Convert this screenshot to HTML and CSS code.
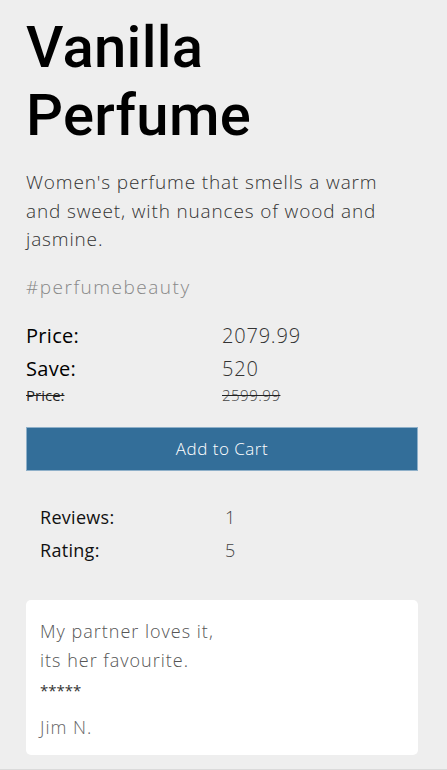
FILE: index.html
```html
<!DOCTYPE html>
<html lang="en">
<head>
<meta charset="utf-8">
<title>Vanilla Perfume</title>
<link rel="stylesheet" href="styles.css">
</head>
<body>
<main class="product">
  <h1 class="title">Vanilla Perfume</h1>
  <p class="desc">Women's perfume that smells a warm and sweet, with nuances of wood and jasmine.</p>
  <p class="tag">#perfumebeauty</p>
  <div class="prices">
    <div class="row big"><span class="label">Price:</span><span class="value">2079.99</span></div>
    <div class="row big"><span class="label">Save:</span><span class="value">520</span></div>
    <div class="row old"><span class="label">Price:</span><span class="value">2599.99</span></div>
  </div>
  <button class="cart">Add to Cart</button>
  <div class="stats">
    <div class="row"><span class="label">Reviews:</span><span class="value">1</span></div>
    <div class="row"><span class="label">Rating:</span><span class="value">5</span></div>
  </div>
  <div class="review">
    <p class="quote">My partner loves it,<br>its her favourite.</p>
    <p class="stars">*****</p>
    <p class="author">Jim N.</p>
  </div>
</main>
<div class="rule"></div>
</body>
</html>
```

FILE: styles.css
```css
html, body {
  margin: 0;
  padding: 0;
  background: #eeeeee;
}
body {
  font-family: "Open Sans", "Lato", sans-serif;
  color: #222;
}
.product {
  padding: 13px 29px 14px 26px;
}
.title {
  margin: 0;
  font-family: "Roboto", "Liberation Sans", sans-serif;
  font-weight: 500;
  font-size: 58px;
  line-height: 68px;
  letter-spacing: 0.3px;
  color: #000;
  width: 260px;
}
.desc {
  margin: 19px 0 0;
  font-size: 19px;
  line-height: 28.5px;
  letter-spacing: 0.85px;
  font-weight: 300;
  color: #333;
}
.tag {
  margin: 19px 0 0;
  font-size: 19px;
  line-height: 28px;
  letter-spacing: 1.5px;
  font-weight: 300;
  color: #888;
}
.prices {
  margin-top: 18px;
}
.row {
  display: grid;
  grid-template-columns: 196px 1fr;
}
.prices .big {
  font-size: 20px;
  line-height: 33px;
  letter-spacing: 0.3px;
}
.prices .big .label {
  color: #000;
}
.prices .big .value {
  font-weight: 300;
  color: #333;
  letter-spacing: 0.8px;
}
.prices .old {
  font-size: 15px;
  line-height: 20px;
  text-decoration: line-through;
  color: #222;
}
.prices .old .value {
  font-weight: 300;
  color: #444;
  letter-spacing: 0.5px;
}
.cart {
  display: block;
  width: 100%;
  margin-top: 22px;
  height: 44px;
  background: #336e99;
  border: 1px solid #8fb0c9;
  color: #fff;
  font-family: inherit;
  font-size: 17px;
  letter-spacing: 0.5px;
  font-weight: 300;
  padding: 0;
}
.stats {
  margin-top: 30px;
  padding: 0 14px;
}
.stats .row {
  grid-template-columns: 185px 1fr;
  font-size: 18px;
  line-height: 33px;
  letter-spacing: 0.3px;
}
.stats .label {
  color: #111;
}
.stats .value {
  font-weight: 300;
  color: #444;
}
.review {
  margin-top: 33px;
  background: #fff;
  border-radius: 5px;
  padding: 17px 14px 14px;
}
.review p {
  margin: 0;
}
.quote {
  font-size: 18px;
  line-height: 29px;
  letter-spacing: 1px;
  font-weight: 300;
  color: #555;
}
.stars {
  margin-top: 4px !important;
  font-size: 15px;
  line-height: 22px;
  color: #333;
}
.author {
  margin-top: 12px !important;
  font-size: 18px;
  line-height: 28px;
  letter-spacing: 1px;
  font-weight: 300;
  color: #666;
}
.rule {
  border-top: 2px solid #dadada;
}
```
